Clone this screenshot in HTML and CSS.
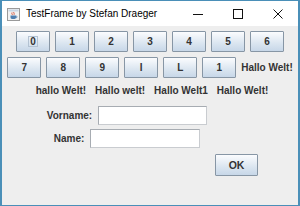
FILE: index.html
```html
<!DOCTYPE html>
<html lang="de">
<head>
  <meta charset="UTF-8" />
  <meta name="viewport" content="width=device-width, initial-scale=1.0"/>
  <title>TestFrame by Stefan Draeger</title>
  <link rel="stylesheet" href="styles.css">
</head>
<body>
  <div class="window">
    <div class="titlebar">
      <svg class="app-icon" width="13" height="13" viewBox="0 0 13 13">
        <rect x="0.5" y="0.5" width="12" height="12" fill="#f2f2f2" stroke="#9a9a9a"/>
        <rect x="1.5" y="1.5" width="10" height="2" fill="#c9d7e6"/>
        <path d="M5 4.5 C4 5.5 6 6 5 7" stroke="#d2472f" fill="none" stroke-width="0.9"/>
        <path d="M7 4 C6 5 8 5.5 7 6.8" stroke="#d2472f" fill="none" stroke-width="0.9"/>
        <path d="M3.5 7.5 H9 V9.5 C9 10.6 8 11 6.3 11 C4.6 11 3.5 10.6 3.5 9.5 Z" fill="#4f7fb0"/>
        <path d="M9 8 C10.5 8 10.5 9.8 9 9.8" stroke="#4f7fb0" fill="none" stroke-width="0.8"/>
      </svg>
      <span class="title">TestFrame by Stefan Draeger</span>
      <div class="controls">
        <span class="ctl">
          <svg width="10" height="10" viewBox="0 0 10 10"><path d="M0 5.5 H10" stroke="#111" stroke-width="1"/></svg>
        </span>
        <span class="ctl">
          <svg width="10" height="10" viewBox="0 0 10 10"><rect x="0.5" y="0.5" width="9" height="9" fill="none" stroke="#111" stroke-width="1"/></svg>
        </span>
        <span class="ctl">
          <svg width="10" height="10" viewBox="0 0 10 10"><path d="M0.5 0.5 L9.5 9.5 M9.5 0.5 L0.5 9.5" stroke="#111" stroke-width="1"/></svg>
        </span>
      </div>
    </div>

    <div class="content">
      <div class="row">
        <button class="btn"><span class="focus">0</span></button>
        <button class="btn">1</button>
        <button class="btn">2</button>
        <button class="btn">3</button>
        <button class="btn">4</button>
        <button class="btn">5</button>
        <button class="btn">6</button>
      </div>

      <div class="row row-second">
        <button class="btn">7</button>
        <button class="btn">8</button>
        <button class="btn">9</button>
        <button class="btn">I</button>
        <button class="btn">L</button>
        <button class="btn">1</button>
        <span class="label">Hallo Welt!</span>
      </div>

      <div class="row row-labels">
        <span class="label">hallo Welt!</span>
        <span class="label">Hallo welt!</span>
        <span class="label">Hallo Welt1</span>
        <span class="label">Hallo Welt!</span>
      </div>

      <div class="form">
        <div class="field-row">
          <label class="label" for="vorname">Vorname:</label>
          <input type="text" id="vorname" class="field field-vorname" />
        </div>
        <div class="field-row">
          <label class="label" for="name">Name:</label>
          <input type="text" id="name" class="field field-name" />
        </div>
      </div>

      <div class="actions">
        <button class="btn btn-ok">OK</button>
      </div>
    </div>
  </div>
</body>
</html>
```

FILE: styles.css
```css
* {
  box-sizing: border-box;
}

body {
  margin: 0;
  font-family: "Liberation Sans", Arial, sans-serif;
  background: #eeeeee;
}

.window {
  width: 300px;
  height: 206px;
  border: 1px solid #4a8fb8;
  border-left-width: 2px;
  border-right-width: 2px;
  background: #eeeeee;
  display: flex;
  flex-direction: column;
}

.titlebar {
  height: 25px;
  background: #fff;
  display: flex;
  align-items: center;
  padding-left: 5px;
}

.app-icon {
  flex: none;
  margin-top: 1px;
}

.title {
  margin-left: 6px;
  font-size: 10px;
  color: #000;
}

.controls {
  margin-left: auto;
  display: flex;
  height: 100%;
}

.ctl {
  width: 40px;
  display: flex;
  align-items: center;
  justify-content: center;
}

.content {
  padding-top: 5px;
}

.row {
  display: flex;
  justify-content: center;
  align-items: center;
  gap: 5px;
  height: 21px;
}

.row-second {
  margin-top: 5px;
}

.row-labels {
  margin-top: 5px;
  height: 14px;
  gap: 9px;
  padding-left: 4px;
}

.label {
  font-size: 10px;
  font-weight: bold;
  color: #333;
  white-space: nowrap;
}

.btn {
  width: 34px;
  height: 21px;
  padding: 0;
  border: 1px solid #8796a5;
  border-radius: 1px;
  background: linear-gradient(#fbfcfe, #dde7f1 55%, #c7d7e8);
  font-family: "Liberation Sans", Arial, sans-serif;
  font-size: 10px;
  font-weight: bold;
  color: #333;
  display: flex;
  align-items: center;
  justify-content: center;
}

.focus {
  border: 1px solid #b3c2d2;
  padding: 0 1px;
  line-height: 9px;
}

.form {
  width: 250px;
  margin-top: 9px;
}

.field-row {
  display: flex;
  justify-content: center;
  align-items: center;
  gap: 6px;
  height: 19px;
}

.field-row + .field-row {
  margin-top: 4px;
}

.field {
  height: 19px;
  border: 1px solid #a7acb2;
  border-right-color: #c9ccd0;
  border-bottom-color: #c9ccd0;
  background: #fff;
  padding: 0;
}

.field-vorname {
  width: 109px;
}

.field-name {
  width: 110px;
}

.actions {
  margin-top: 6px;
  padding-left: 213px;
}

.btn-ok {
  width: 43px;
  height: 22px;
  font-size: 10.5px;
}
```
